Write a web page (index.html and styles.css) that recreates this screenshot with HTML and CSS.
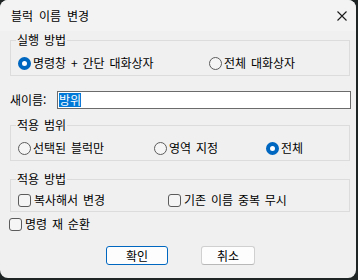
FILE: index.html
```html
<!DOCTYPE html>
<html lang="ko">
<head>
    <meta charset="UTF-8">
    <title>블럭 이름 변경</title>
    <link rel="stylesheet" href="styles.css">
</head>
<body>
    <div class="window">
        <div class="titlebar">
            <span class="title">블럭 이름 변경</span>
            <svg class="close" width="10" height="10" viewBox="0 0 10 10">
                <path d="M0.5 0.5 L9.5 9.5 M9.5 0.5 L0.5 9.5" stroke="#1a1a1a" stroke-width="1.1" fill="none"/>
            </svg>
        </div>

        <div class="content">
            <fieldset class="group">
                <legend>실행 방법</legend>
                <div class="options run">
                    <label class="opt"><span class="radio checked"></span>명령창 + 간단 대화상자</label>
                    <label class="opt"><span class="radio"></span>전체 대화상자</label>
                </div>
            </fieldset>

            <div class="name-row">
                <span class="name-label">새이름:</span>
                <div class="name-input"><span class="selected">방위</span></div>
            </div>

            <fieldset class="group scope-group">
                <legend>적용 범위</legend>
                <div class="options scope">
                    <label class="opt"><span class="radio"></span>선택된 블럭만</label>
                    <label class="opt"><span class="radio"></span>영역 지정</label>
                    <label class="opt"><span class="radio checked"></span>전체</label>
                </div>
            </fieldset>

            <fieldset class="group method-group">
                <legend>적용 방법</legend>
                <div class="options method">
                    <label class="opt"><span class="check"></span>복사해서 변경</label>
                    <label class="opt"><span class="check"></span>기존 이름 중복 무시</label>
                </div>
            </fieldset>

            <label class="opt repeat"><span class="check"></span>명령 재 순환</label>

            <div class="buttons">
                <button class="btn default">확인</button>
                <button class="btn">취소</button>
            </div>
        </div>
    </div>
</body>
</html>
```

FILE: styles.css
```css
* {
    margin: 0;
    padding: 0;
    box-sizing: border-box;
}
body {
    font-family: 'Noto Sans CJK KR', 'Noto Sans', sans-serif;
    font-size: 12px;
    line-height: 14px;
    word-spacing: 1.5px;
    color: #000;
    background: #1f2424;
    width: 358px;
    height: 280px;
    overflow: hidden;
}
.window {
    width: 356px;
    height: 278px;
    background: #f0f0f0;
    border-radius: 8px;
    overflow: hidden;
}
.titlebar {
    height: 31px;
    background: #f3f3f3;
    display: flex;
    align-items: center;
    justify-content: space-between;
    padding: 0 9px 0 11px;
}
.title {
    font-size: 12px;
    word-spacing: 2.5px;
}
.close {
    display: block;
}
.content {
    padding: 2px 5px 0 10px;
}
.group {
    border: 1px solid #dcdcdc;
    margin: 0 1px 0 0;
    padding: 9px 0 5px 7px;
    min-width: 0;
}
.group legend {
    padding: 0 1px;
    margin-left: -2px;
    line-height: 14px;
}
.options {
    display: grid;
}
.options.run {
    grid-template-columns: 191px auto;
}
.options.scope {
    grid-template-columns: 136px 112px auto;
}
.options.method {
    grid-template-columns: 150px auto;
}
.opt {
    display: flex;
    align-items: center;
    gap: 2px;
    height: 14px;
    white-space: nowrap;
}
.radio {
    width: 13px;
    height: 13px;
    border-radius: 50%;
    border: 1px solid #5c5c5c;
    background: #f5f5f5;
    flex-shrink: 0;
}
.radio.checked {
    border: 4px solid #0067c0;
    background: #fff;
}
.check {
    width: 13px;
    height: 13px;
    border-radius: 3px;
    border: 1px solid #5c5c5c;
    background: #f5f5f5;
    flex-shrink: 0;
    margin-right: 1px;
}
.name-row {
    display: flex;
    align-items: center;
    margin-top: 15px;
    height: 18px;
}
.name-label {
    width: 47px;
}
.name-input {
    flex: 1;
    height: 18px;
    background: #fff;
    border: 1px solid #6b6b6b;
    padding: 1px 0 0 1px;
}
.selected {
    display: inline-block;
    background: #0078d7;
    color: #fff;
    height: 14px;
    line-height: 14px;
}
.scope-group {
    margin-top: 9px;
}
.method-group {
    margin-top: 11px;
    padding-top: 7px;
    padding-bottom: 4px;
}
.repeat {
    margin-top: 5px;
    margin-left: -1px;
}
.buttons {
    display: flex;
    gap: 33px;
    margin: 15px 0 0 96px;
}
.btn {
    font-family: inherit;
    font-size: 12px;
    line-height: 14px;
    height: 19px;
    width: 54px;
    background: #fdfdfd;
    border: 1px solid #d0d0d0;
    border-bottom-color: #b8b8b8;
    border-radius: 3px;
    color: #000;
}
.btn.default {
    width: 62px;
    border: 1px solid #0067c0;
}
```
